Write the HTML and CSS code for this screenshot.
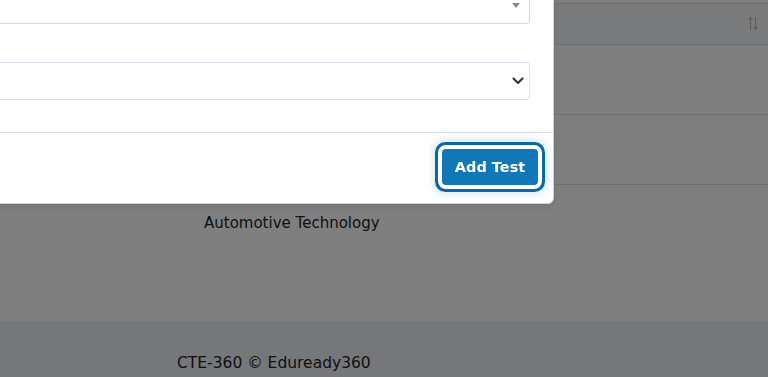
FILE: index.html
```
<!DOCTYPE html>
<html>
<head>
    <meta charset="UTF-8">
    <title>Tests</title>
    <link rel="stylesheet" href="styles.css">
</head>
<body>
    <div class="page">
        <div class="main">
            <table class="data-table">
                <tr class="head-row">
                    <th class="col-name"></th>
                    <th class="col-sort">
                        <svg class="sort-icon" width="10" height="15" viewBox="0 0 10 15">
                            <path d="M2.5 14V1.5M0.5 3.8L2.5 1.3L4.5 3.8" fill="none" stroke="#b8b8b8" stroke-width="1.1"/>
                            <path d="M7.5 1V13.5M5.5 11.2L7.5 13.7L9.5 11.2" fill="none" stroke="#b8b8b8" stroke-width="1.1"/>
                        </svg>
                    </th>
                </tr>
                <tr class="body-row">
                    <td class="col-name"></td>
                    <td></td>
                </tr>
                <tr class="body-row">
                    <td class="col-name"></td>
                    <td></td>
                </tr>
                <tr class="body-row last">
                    <td class="col-name">Automotive Technology</td>
                    <td></td>
                </tr>
            </table>
        </div>
        <footer class="footer">CTE-360 © Eduready360</footer>
    </div>

    <div class="backdrop"></div>

    <div class="modal">
        <div class="modal-body">
            <div class="select2-box">
                <span class="select2-caret"></span>
            </div>
            <div class="form-select">
                <svg width="12" height="8" viewBox="0 0 12 8">
                    <path d="M1.5 1.5L6 6L10.5 1.5" fill="none" stroke="#343a40" stroke-width="2.2" stroke-linecap="round" stroke-linejoin="round"/>
                </svg>
            </div>
        </div>
        <div class="modal-footer">
            <button class="btn-add">Add Test</button>
        </div>
    </div>
</body>
</html>
```
FILE: styles.css
```
* {
    box-sizing: border-box;
}

html, body {
    margin: 0;
    height: 100%;
    overflow: hidden;
}

body {
    font-family: "DejaVu Sans", "Noto Sans", sans-serif;
    color: #212529;
    background-color: #fff;
}

.page {
    display: flex;
    flex-direction: column;
    height: 377px;
}

.main {
    flex: 1;
    padding-top: 3px;
}

.data-table {
    width: 100%;
    border-collapse: collapse;
    border-top: 1px solid #dde3e8;
}

.data-table th,
.data-table td {
    padding: 0;
    text-align: left;
    font-weight: normal;
}

.head-row {
    height: 41px;
    background-color: #f4f6fa;
    border-bottom: 1px solid #dde3e8;
}

.body-row {
    height: 70px;
    border-bottom: 1px solid #dde3e8;
}

.body-row.last {
    border-bottom: none;
    vertical-align: top;
}

.col-name {
    padding-left: 204px !important;
    font-size: 15px;
}

.body-row.last .col-name {
    padding-top: 29px !important;
}

.col-sort {
    padding-right: 10px !important;
}

.sort-icon {
    display: block;
    margin-left: auto;
    margin-top: -2px;
}

.footer {
    height: 55px;
    border-top: 1px solid #dde3e8;
    background-color: #eceef6;
    padding: 31px 0 0 177px;
    font-size: 15.5px;
    color: #212529;
}

.backdrop {
    position: fixed;
    inset: 0;
    background-color: rgba(0, 0, 0, 0.5);
}

.modal {
    position: absolute;
    left: -246px;
    top: -31px;
    width: 800px;
    background-color: #fff;
    border: 1px solid #cfd4d8;
    border-radius: 6px;
    box-shadow: 0 2px 6px rgba(0, 0, 0, 0.1);
}

.modal-body {
    padding: 16px 23px 32px;
}

.select2-box {
    position: relative;
    height: 38px;
    border: 1px solid #d3d6da;
    border-radius: 4px;
    margin-bottom: 38px;
}

.select2-caret {
    position: absolute;
    right: 9px;
    top: 16px;
    border-top: 5px solid #888;
    border-left: 4px solid transparent;
    border-right: 4px solid transparent;
}

.form-select {
    height: 38px;
    border: 1px solid #d6e0ea;
    border-radius: 4px;
    display: flex;
    align-items: center;
    justify-content: flex-end;
    padding-right: 5px;
}

.form-select svg {
    display: block;
}

.modal-footer {
    height: 71px;
    border-top: 1px solid #d6e0ea;
    display: flex;
    align-items: center;
    justify-content: flex-end;
    padding: 0 15px 3px 0;
}

.btn-add {
    width: 96px;
    height: 36px;
    border: none;
    border-radius: 4px;
    background-color: #1277b7;
    color: #fff;
    font-family: "DejaVu Sans", sans-serif;
    font-weight: bold;
    font-size: 14.5px;
    padding: 0;
    box-shadow: 0 0 0 4px #fff, 0 0 0 7px #0c67a3, 0 0 10px 8px rgba(90, 160, 215, 0.3);
    cursor: pointer;
}
```
